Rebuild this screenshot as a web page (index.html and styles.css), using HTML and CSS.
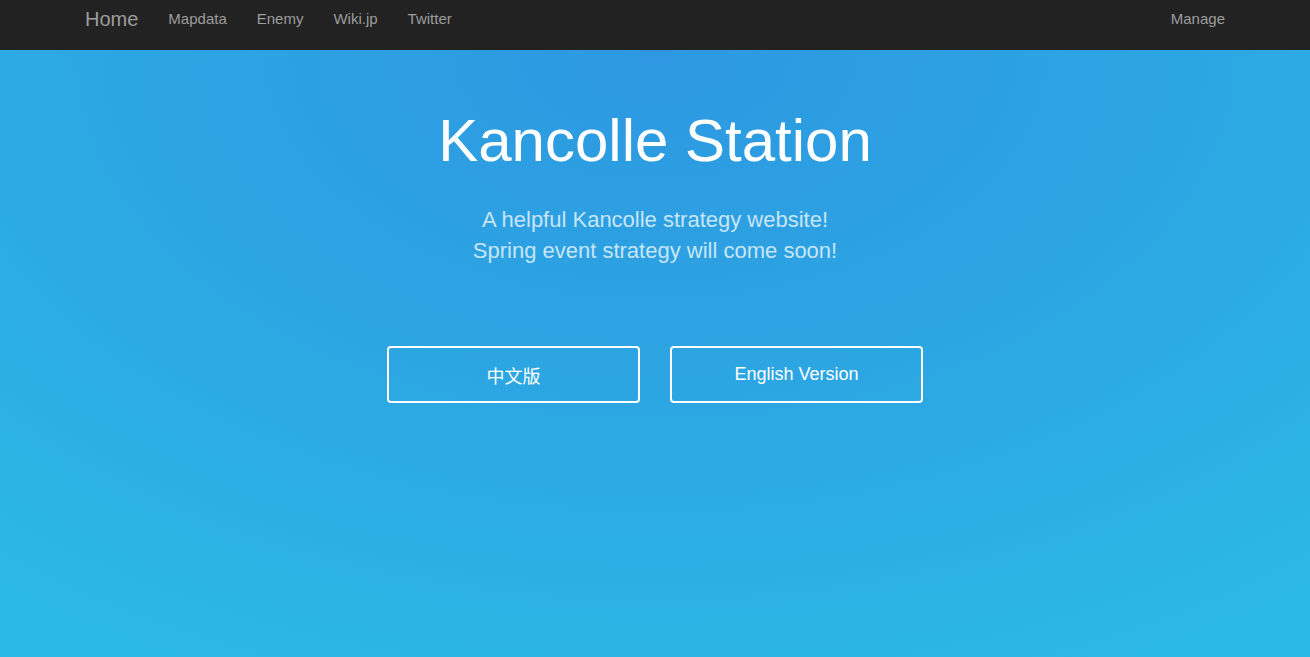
FILE: index.html
```html
<!DOCTYPE html>
<html lang="en">
<head>
<meta charset="utf-8">
<title>Kancolle Station</title>
<link rel="stylesheet" href="styles.css">
</head>
<body>
<nav class="navbar">
  <div class="nav-container">
    <div class="nav-left">
      <a class="brand" href="#">Home</a>
      <a class="nav-link" href="#">Mapdata</a>
      <a class="nav-link" href="#">Enemy</a>
      <a class="nav-link" href="#">Wiki.jp</a>
      <a class="nav-link" href="#">Twitter</a>
    </div>
    <div class="nav-right">
      <a class="nav-link" href="#">Manage</a>
    </div>
  </div>
</nav>
<main class="hero">
  <h1 class="title">Kancolle Station</h1>
  <p class="subtitle">A helpful Kancolle strategy website!<br>Spring event strategy will come soon!</p>
  <div class="buttons">
    <a class="btn" href="#">中文版</a>
    <a class="btn" href="#">English Version</a>
  </div>
</main>
</body>
</html>
```

FILE: styles.css
```css
* { box-sizing: border-box; }
html, body { margin: 0; padding: 0; height: 100%; }
body {
  font-family: "Liberation Sans", Arial, "Noto Sans CJK SC", sans-serif;
  background: radial-gradient(ellipse 1100px 700px at 655px 50px, #2d98e1 0%, #2ca8e3 55%, #2bbae5 100%);
  background-color: #2bbae5;
  min-height: 657px;
}
a { text-decoration: none; }
.navbar {
  height: 50px;
  background: #222222;
}
.nav-container {
  width: 1170px;
  margin: 0 auto;
  display: flex;
  justify-content: space-between;
  align-items: stretch;
  height: 50px;
}
.nav-left, .nav-right { display: flex; align-items: stretch; }
.brand {
  color: #9d9d9d;
  font-size: 20px;
  padding: 0 15px;
  line-height: 38px;
}
.nav-link {
  color: #9d9d9d;
  font-size: 15px;
  padding: 0 15px;
  line-height: 38px;
}
.hero {
  display: flex;
  flex-direction: column;
  align-items: center;
  padding-top: 55px;
}
.title {
  margin: 0;
  color: #ffffff;
  font-weight: 400;
  font-size: 60px;
  line-height: 72px;
}
.subtitle {
  margin: 27px 0 0;
  color: #c6e6f7;
  font-size: 22px;
  line-height: 31px;
  text-align: center;
}
.buttons {
  display: flex;
  gap: 30px;
  margin-top: 80px;
}
.btn {
  width: 253px;
  height: 57px;
  border: 2px solid #ffffff;
  border-radius: 4px;
  color: #ffffff;
  font-size: 18px;
  display: flex;
  align-items: center;
  justify-content: center;
}
```
